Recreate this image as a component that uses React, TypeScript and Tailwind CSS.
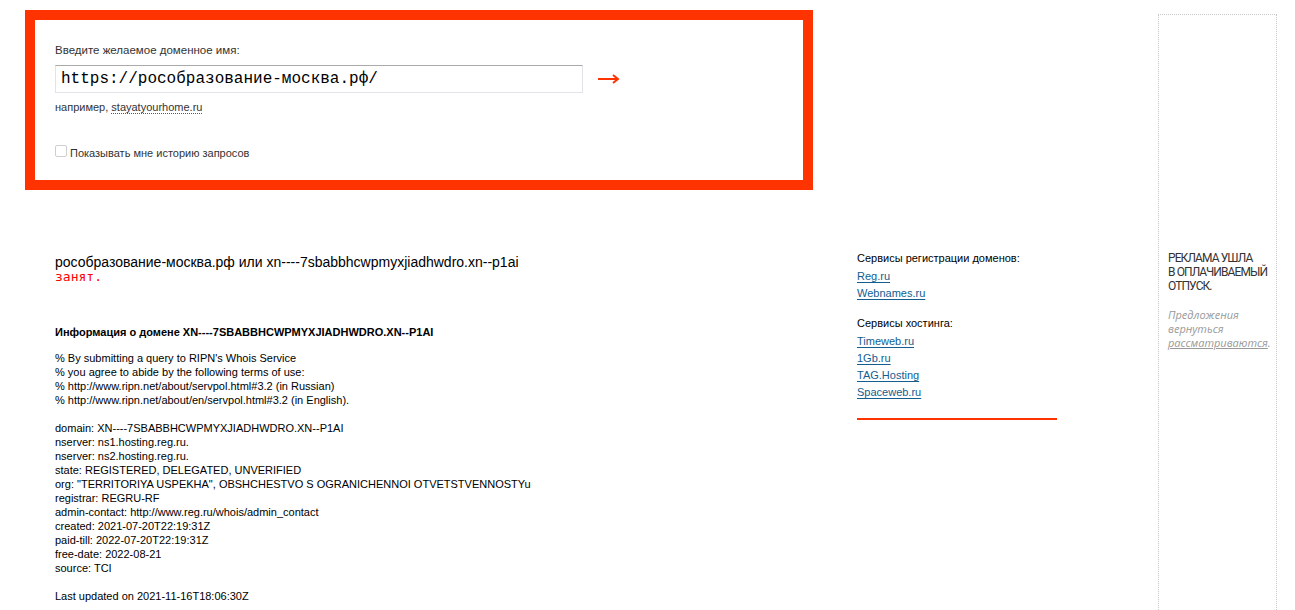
const whoisHead = [
  "% By submitting a query to RIPN's Whois Service",
  '% you agree to abide by the following terms of use:',
  '% http://www.ripn.net/about/servpol.html#3.2 (in Russian)',
  '% http://www.ripn.net/about/en/servpol.html#3.2 (in English).',
];

const whoisBody = [
  'domain: XN----7SBABBHCWPMYXJIADHWDRO.XN--P1AI',
  'nserver: ns1.hosting.reg.ru.',
  'nserver: ns2.hosting.reg.ru.',
  'state: REGISTERED, DELEGATED, UNVERIFIED',
  'org: "TERRITORIYA USPEKHA", OBSHCHESTVO S OGRANICHENNOI OTVETSTVENNOSTYu',
  'registrar: REGRU-RF',
  'admin-contact: http://www.reg.ru/whois/admin_contact',
  'created: 2021-07-20T22:19:31Z',
  'paid-till: 2022-07-20T22:19:31Z',
  'free-date: 2022-08-21',
  'source: TCI',
];

const registrars = ['Reg.ru', 'Webnames.ru'];
const hosting = ['Timeweb.ru', '1Gb.ru', 'TAG.Hosting', 'Spaceweb.ru'];

function SideLink({ label }: { label: string }) {
  return (
    <li className="leading-[17px]">
      <a href="#" className="text-[#135d8f] underline underline-offset-2">
        {label}
      </a>
    </li>
  );
}

export default function App() {
  return (
    <div className="flex bg-white text-[11px] text-black font-['Liberation_Sans',Arial,sans-serif] h-[610px] overflow-hidden">
      <div className="w-[1158px] shrink-0">
        {/* search box */}
        <div className="ml-[25px] mt-[10px] w-[788px] h-[180px] border-[10px] border-[#ff3300] pl-[20px] pt-[23px]">
          <div className="leading-[14px] text-[11.5px] text-[#333]">Введите желаемое доменное имя:</div>
          <div className="mt-[8px] flex items-center">
            <input
              defaultValue="https://рособразование-москва.рф/"
              className="w-[528px] h-[28px] border border-[#e2e2ea] border-t-[#aaaaaa] px-[5px] text-[16px] font-['Liberation_Mono','Courier_New',monospace] text-black outline-none"
            />
            <button className="ml-[14px] text-[#ff3300]">
              <svg width="24" height="12" viewBox="0 0 24 12">
                <path d="M1 6h19" stroke="#ff3300" strokeWidth="2" />
                <path d="M16 2l5 4-5 4" stroke="#ff3300" strokeWidth="2" fill="none" />
              </svg>
            </button>
          </div>
          <div className="mt-[7px] leading-[14px] text-[#333]">
            например,{' '}
            <a href="#" className="text-[#333] border-b border-dotted border-[#555]">
              stayatyourhome.ru
            </a>
          </div>
          <label className="mt-[32px] flex items-center leading-[14px] text-[#333]">
            <span className="inline-block w-[12px] h-[12px] rounded-[2px] border border-[#cfcfcf] mr-[3px] -mt-[4px]" />
            Показывать мне историю запросов
          </label>
        </div>

        {/* result + sidebar */}
        <div className="flex mt-[61px]">
          <div className="w-[857px] pl-[55px] pt-[3px] shrink-0">
            <div className="text-[14px] leading-[16px]">
              рособразование-москва.рф или xn----7sbabbhcwpmyxjiadhwdro.xn--p1ai
            </div>
            <div className="text-[13px] leading-[14px] text-[#ff0000] font-['DejaVu_Sans_Mono',monospace]">занят.</div>

            <h2 className="mt-[41px] font-bold leading-[14px]">
              Информация о домене XN----7SBABBHCWPMYXJIADHWDRO.XN--P1AI
            </h2>

            <div className="mt-[12px] leading-[14px]">
              {whoisHead.map((l) => (
                <div key={l}>{l}</div>
              ))}
              <div className="h-[14px]" />
              {whoisBody.map((l) => (
                <div key={l}>{l}</div>
              ))}
              <div className="h-[14px]" />
              <div>Last updated on 2021-11-16T18:06:30Z</div>
            </div>
          </div>

          <div className="w-[200px]">
            <div className="leading-[14px]">Сервисы регистрации доменов:</div>
            <ul className="mt-[3px]">
              {registrars.map((r) => (
                <SideLink key={r} label={r} />
              ))}
            </ul>
            <div className="mt-[14px] leading-[14px]">Сервисы хостинга:</div>
            <ul className="mt-[3px]">
              {hosting.map((r) => (
                <SideLink key={r} label={r} />
              ))}
            </ul>
            <div className="mt-[17px] h-[2px] bg-[#ff3300]" />
          </div>
        </div>
      </div>

      {/* ad placeholder */}
      <div className="w-[119px] mt-[14px] h-[620px] border border-dotted border-[#c8c8c8] pl-[9px] pt-[236px] shrink-0">
        <div className="text-[12px] leading-[14px] text-[#333] uppercase font-['Roboto',sans-serif] tracking-[-0.9px]">
          Реклама ушла
          <br />в оплачиваемый
          <br />
          отпуск.
        </div>
        <div className="mt-[15px] text-[11px] leading-[14px] italic text-[#999] font-['Open_Sans',sans-serif]">
          Предложения
          <br />
          вернуться
          <br />
          <a href="#" className="text-[#999] underline">рассматриваются</a>.
        </div>
      </div>
    </div>
  );
}
